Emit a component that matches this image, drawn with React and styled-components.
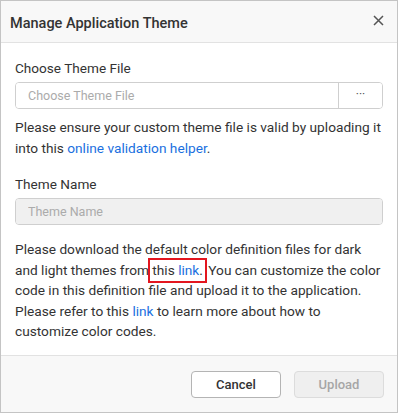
import React from 'react';
import styled, { createGlobalStyle } from 'styled-components';

const GlobalStyle = createGlobalStyle`
  html, body {
    margin: 0;
    padding: 0;
    background: #ffffff;
  }
  * {
    box-sizing: border-box;
  }
`;

const Dialog = styled.div`
  display: flex;
  flex-direction: column;
  width: 398px;
  height: 413px;
  border: 1px solid #c4c4c4;
  background: #ffffff;
  font-family: Roboto, "Liberation Sans", sans-serif;
  color: #333333;
`;

const Header = styled.header`
  display: flex;
  align-items: center;
  justify-content: space-between;
  height: 42px;
  padding: 3px 11px 0 9px;
  background: #f8f8f8;
  border-bottom: 1px solid #e2e2e2;
`;

const Title = styled.h1`
  margin: 0;
  font-size: 14.5px;
  font-weight: 500;
  color: #333333;
`;

const CloseButton = styled.button`
  display: flex;
  align-items: center;
  justify-content: center;
  width: 16px;
  height: 16px;
  margin-top: -5px;
  padding: 0;
  border: none;
  background: none;
  cursor: pointer;
`;

const Body = styled.div`
  flex: 1;
  display: flex;
  flex-direction: column;
  padding: 15px 14px 0 14px;
`;

const Label = styled.label`
  display: block;
  font-size: 13.6px;
  line-height: 20px;
  margin-bottom: 4px;
  margin-top: ${p => p.$gap || 0}px;
`;

const InputGroup = styled.div`
  display: flex;
  height: 27px;
  border: 1px solid #cfcfcf;
  border-radius: 4px;
  overflow: hidden;
`;

const TextInput = styled.input`
  flex: 1;
  min-width: 0;
  border: none;
  outline: none;
  padding: 0 12px;
  font-family: inherit;
  font-size: 12.5px;
  color: #333333;
  background: ${p => (p.disabled ? '#f0f0f0' : '#ffffff')};
  &::placeholder {
    color: #ababab;
  }
`;

const BrowseButton = styled.button`
  width: 44px;
  border: none;
  border-left: 1px solid #cfcfcf;
  background: #ffffff;
  font-family: inherit;
  font-size: 12px;
  color: #555555;
  padding: 0 0 4px;
  cursor: pointer;
`;

const Text = styled.p`
  margin: ${p => p.$top || 0}px 0 0;
  font-size: 13.7px;
  line-height: ${p => p.$lh || 21}px;
  color: #333333;
`;

const Link = styled.a`
  color: #1a6fe0;
  text-decoration: none;
`;

const Highlight = styled.span`
  outline: 2px solid #e3161f;
  outline-offset: 0;
  padding: 2px 2px 3px 2px;
  margin-left: -2px;
`;

const Footer = styled.footer`
  display: flex;
  justify-content: flex-end;
  gap: 13px;
  height: 57px;
  padding: 15px 13px 0 0;
  background: #f8f8f8;
  border-top: 1px solid #e2e2e2;
`;

const Button = styled.button`
  width: 90px;
  height: 27px;
  border-radius: 4px;
  font-family: inherit;
  font-size: 13px;
  font-weight: 500;
  border: 1px solid ${p => (p.$disabled ? '#dcdcdc' : '#b4b4b4')};
  background: ${p => (p.$disabled ? '#efefef' : '#ffffff')};
  color: ${p => (p.$disabled ? '#a6a6a6' : '#333333')};
  cursor: ${p => (p.$disabled ? 'default' : 'pointer')};
`;

export default function App() {
  return (
    <>
      <GlobalStyle />
      <Dialog>
        <Header>
          <Title>Manage Application Theme</Title>
          <CloseButton aria-label="Close">
            <svg width="11" height="11" viewBox="0 0 11 11">
              <path d="M1 1 L10 10 M10 1 L1 10" stroke="#555555" strokeWidth="1.5" />
            </svg>
          </CloseButton>
        </Header>
        <Body>
          <Label>Choose Theme File</Label>
          <InputGroup>
            <TextInput placeholder="Choose Theme File" readOnly />
            <BrowseButton>···</BrowseButton>
          </InputGroup>
          <Text $top={8}>
            Please ensure your custom theme file is valid by uploading it
            into this <Link href="#">online validation helper</Link>.
          </Text>
          <Label $gap={15}>Theme Name</Label>
          <InputGroup>
            <TextInput placeholder="Theme Name" disabled />
          </InputGroup>
          <Text $top={14} $lh={20.5}>
            Please download the default color definition files for dark
            and light themes from <Highlight>this <Link href="#">link</Link>.</Highlight> You
            can customize the color code in this definition file and upload it to the
            application. Please refer to this <Link href="#">link</Link> to learn more
            about how to customize color codes.
          </Text>
        </Body>
        <Footer>
          <Button>Cancel</Button>
          <Button $disabled disabled>Upload</Button>
        </Footer>
      </Dialog>
    </>
  );
}
